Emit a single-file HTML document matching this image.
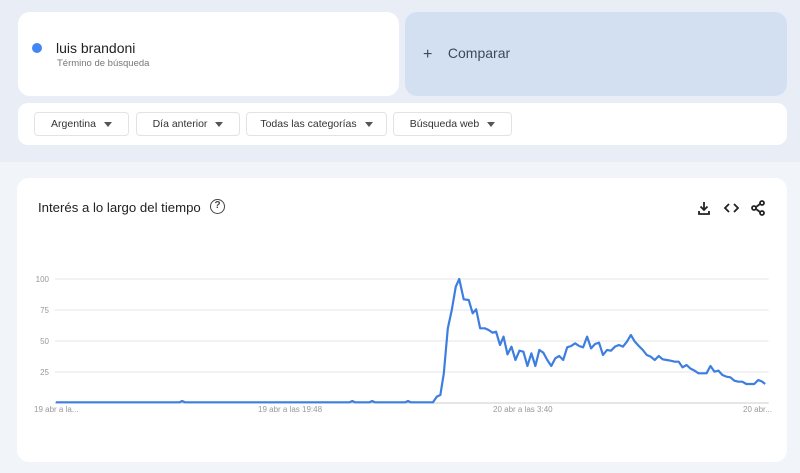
<!DOCTYPE html>
<html><head><meta charset="utf-8"><style>
*{margin:0;padding:0;box-sizing:border-box}
body{width:800px;height:473px;overflow:hidden;background:#f1f4f9;font-family:"Liberation Sans",Arial,sans-serif;position:relative}
.top{position:absolute;left:0;top:0;width:800px;height:162px;background:#e9eef6}
.abs{position:absolute}
.card{background:#fff;border-radius:12px}
.btn{position:absolute;top:112px;height:24px;border:1px solid #e3e3e3;border-radius:4px;background:#fff;font-size:10.5px;color:#333;display:flex;align-items:center;justify-content:center;gap:8px}
.tri{width:0;height:0;border-left:4px solid transparent;border-right:4px solid transparent;border-top:5px solid #555}
.yl{position:absolute;font-size:8px;color:#999;width:30px;text-align:right;left:19px}
.xl{position:absolute;font-size:8px;color:#999;top:405px}
</style></head><body>
<div class="top"></div>
<div class="abs card" style="left:18px;top:12px;width:381px;height:84px"></div>
<div class="abs" style="left:32px;top:43px;width:10px;height:10px;border-radius:50%;background:#4285f4"></div>
<div class="abs" style="left:56px;top:40px;font-size:14px;color:#222">luis brandoni</div>
<div class="abs" style="left:57px;top:58px;font-size:9.5px;color:#777">Término de búsqueda</div>
<div class="abs" style="left:405px;top:12px;width:382px;height:84px;background:#d3e0f2;border-radius:12px"></div>
<div class="abs" style="left:423px;top:45px;font-size:14px;color:#3c4a5c"><span style="font-size:16px;position:relative;top:1px">+</span>&nbsp;&nbsp;&nbsp;&nbsp;Comparar</div>
<div class="abs card" style="left:18px;top:103px;width:769px;height:42px;border-radius:10px"></div>
<div class="btn" style="left:34px;width:95px">Argentina <span class="tri"></span></div>
<div class="btn" style="left:136px;width:104px">Día anterior <span class="tri"></span></div>
<div class="btn" style="left:246px;width:141px">Todas las categorías <span class="tri"></span></div>
<div class="btn" style="left:393px;width:119px">Búsqueda web <span class="tri"></span></div>

<div class="abs card" style="left:17px;top:178px;width:770px;height:284px"></div>
<div class="abs" style="left:38px;top:200px;font-size:13.2px;color:#222">Interés a lo largo del tiempo</div>
<div class="abs" style="left:210px;top:199px;width:15px;height:15px;border:1.5px solid #444;border-radius:50%;font-size:10px;font-weight:bold;color:#444;text-align:center;line-height:12px">?</div>
<svg class="abs" style="left:696px;top:199px" width="72" height="18" viewBox="0 0 72 18" fill="none" stroke="#222" stroke-width="1.8">
<path d="M8 3v8M4.5 7.5L8 11l3.5-3.5M3 12v3h10v-3"/>
<path d="M33 5l-4 4 4 4M38 5l4 4-4 4"/>
<circle cx="66" cy="4" r="2"/><circle cx="58" cy="9" r="2"/><circle cx="66" cy="14" r="2"/><path d="M60 8l4-3M60 10l4 3"/>
</svg>

<div class="yl" style="top:275px">100</div>
<div class="yl" style="top:306px">75</div>
<div class="yl" style="top:337px">50</div>
<div class="yl" style="top:368px">25</div>
<svg class="abs" style="left:20px;top:260px" width="780" height="160" viewBox="0 0 1568 480" preserveAspectRatio="none">
<g stroke="#e6e6e6"><path d="M70 57H1505M70 150H1505M70 243H1505M70 336H1505" vector-effect="non-scaling-stroke"/></g>
<path d="M70 429H1505" stroke="#ccc" vector-effect="non-scaling-stroke"/>
<path fill="none" stroke="#3d7ee0" stroke-width="2.2" stroke-linejoin="round" vector-effect="non-scaling-stroke" d="M72 427H320L326 423L332 427H662L668 423L674 427H702L708 423L714 427H774L780 423L786 427H830L838 410L845 405L852 340L860 205L868 150L876 80L883 57L892 118L902 120L910 160L917 148L925 205L935 205L942 210L950 218L957 215L965 255L972 230L980 283L988 260L996 300L1004 272L1012 275L1020 318L1028 280L1036 318L1044 270L1052 278L1060 300L1068 318L1076 295L1084 288L1092 300L1100 262L1108 258L1116 250L1124 258L1132 262L1140 230L1148 265L1156 252L1164 248L1172 285L1180 270L1188 272L1196 260L1204 255L1212 260L1220 245L1228 225L1236 245L1244 258L1252 270L1260 285L1268 290L1276 300L1284 288L1292 298L1300 300L1308 302L1316 305L1324 305L1332 322L1340 315L1348 326L1356 332L1364 340L1372 340L1380 340L1388 318L1396 335L1404 332L1412 345L1420 350L1428 352L1436 362L1444 365L1452 365L1460 372L1468 372L1476 372L1484 360L1492 365L1498 372"/>
</svg>
<div class="xl" style="left:34px">19 abr a la...</div>
<div class="xl" style="left:258px">19 abr a las 19:48</div>
<div class="xl" style="left:493px">20 abr a las 3:40</div>
<div class="xl" style="left:743px">20 abr...</div>
</body></html>
